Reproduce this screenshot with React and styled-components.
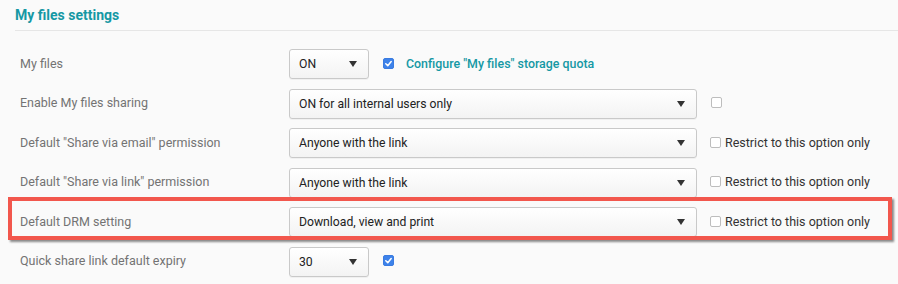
import styled, { createGlobalStyle } from "styled-components"

const Teal = "#1598a4"

const rows = [
  { label: "My files", value: "ON", small: true, extra: "quota" },
  { label: "Enable My files sharing", value: "ON for all internal users only", extra: "box" },
  { label: 'Default "Share via email" permission', value: "Anyone with the link", extra: "restrict" },
  { label: 'Default "Share via link" permission', value: "Anyone with the link", extra: "restrict" },
  { label: "Default DRM setting", value: "Download, view and print", extra: "restrict", highlight: true },
  { label: "Quick share link default expiry", value: "30", small: true, extra: "checked" },
]

const Check = ({ checked }) => (
  <Box $checked={checked}>
    {checked && (
      <svg width="9" height="9" viewBox="0 0 10 10">
        <path d="M2 5.3 L4.2 7.4 L8 2.8" fill="none" stroke="white" strokeWidth="1.7" strokeLinecap="round" strokeLinejoin="round" />
      </svg>
    )}
  </Box>
)

const App = () => {
  return (
    <>
      <GlobalStyle />
      <Page>
        <Title>My files settings</Title>
        <Rows>
          {rows.map((r, i) => (
            <Row key={i} $highlight={r.highlight}>
              <Label>{r.label}</Label>
              <Select $small={r.small}>
                <span>{r.value}</span>
                <Arrow />
              </Select>
              {r.extra === "quota" && (
                <Extra>
                  <Check checked />
                  <Link>Configure "My files" storage quota</Link>
                </Extra>
              )}
              {r.extra === "box" && (
                <Extra>
                  <Check />
                </Extra>
              )}
              {r.extra === "restrict" && (
                <Extra $tight>
                  <Check />
                  <Restrict>Restrict to this option only</Restrict>
                </Extra>
              )}
              {r.extra === "checked" && (
                <Extra>
                  <Check checked />
                </Extra>
              )}
            </Row>
          ))}
        </Rows>
      </Page>
    </>
  )
}

//styling starts----------------------------------------

const GlobalStyle = createGlobalStyle`
body {
  margin: 0;
  background: #fafafa;
  font-family: Roboto, "Liberation Sans", Arial, sans-serif;
}
`

const Page = styled.div`
width: 898px;
height: 284px;
overflow: hidden;
background: #fafafa;
padding-top: 7px;
box-sizing: border-box;
`

const Title = styled.div`
margin-left: 15px;
padding-bottom: 7px;
border-bottom: 1px solid #e6e6e6;
color: ${Teal};
font-size: 14px;
font-weight: 700;
line-height: 16px;
`

const Rows = styled.div`
display: flex;
flex-direction: column;
padding-top: 18px;
`

const Row = styled.div`
position: relative;
display: flex;
align-items: center;
height: 30px;
margin-bottom: 9.6px;
padding-left: 20px;

${(p) => p.$highlight && `
&::after {
  content: "";
  position: absolute;
  left: 8px;
  right: 6px;
  top: -10px;
  bottom: -3px;
  border: 4.5px solid #f2574d;
  box-shadow: 2px 2px 2px rgba(0,0,0,0.45);
  pointer-events: none;
}
`}
`

const Label = styled.div`
width: 269px;
flex-shrink: 0;
color: #737373;
font-size: 12.5px;
margin-top: -2px;
`

const Select = styled.div`
box-sizing: border-box;
display: flex;
align-items: center;
justify-content: space-between;
width: ${(p) => (p.$small ? "80px" : "408px")};
height: 30px;
padding: 0 10px 0 9px;
border: 1px solid #c9c9c9;
border-radius: 3px;
background: linear-gradient(#ffffff, #f3f3f3);
box-shadow: 0 1px 0 rgba(0,0,0,0.04);
color: #222;
font-size: 12.2px;
`

const Arrow = styled.div`
width: 0;
height: 0;
border-left: 4px solid transparent;
border-right: 4px solid transparent;
border-top: 6px solid #333;
margin-right: 1px;
`

const Extra = styled.div`
display: flex;
align-items: center;
gap: 4px;
margin-left: ${(p) => (p.$tight ? "13px" : "14px")};
margin-top: -2px;
`

const Box = styled.span`
display: inline-flex;
align-items: center;
justify-content: center;
box-sizing: border-box;
width: 11px;
height: 11px;
border-radius: 2px;
border: 1px solid ${(p) => (p.$checked ? "#3a7be0" : "#bdbdbd")};
background: ${(p) => (p.$checked ? "#3d82ea" : "#fff")};
`

const Link = styled.span`
margin-left: 8px;
color: ${Teal};
font-size: 12.4px;
font-weight: 500;
`

const Restrict = styled.span`
color: #333;
font-size: 12.5px;
`

export default App
